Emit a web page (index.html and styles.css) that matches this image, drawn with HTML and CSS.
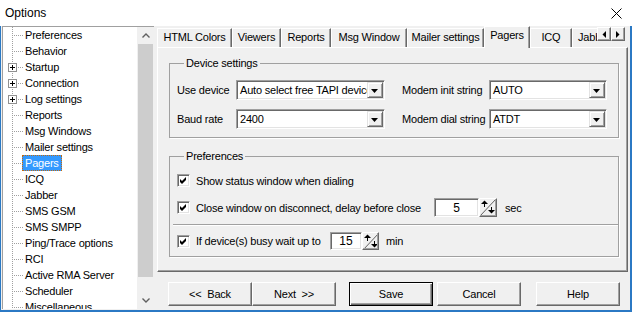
FILE: index.html
```html
<!DOCTYPE html>
<html lang="en">
<head>
    <meta charset="UTF-8">
    <title>Options</title>
    <link rel="stylesheet" href="styles.css">
</head>
<body>

<div class="titlebar">
    <span class="title">Options</span>
    <svg class="close" width="11" height="11" viewBox="0 0 11 11">
        <path d="M0.5 0.5 L10.5 10.5 M10.5 0.5 L0.5 10.5" stroke="#000" stroke-width="1"/>
    </svg>
</div>

<div class="window">
    <div class="tree">
        <ul class="tree-list">
            <li><span class="label">Preferences</span></li>
            <li><span class="label">Behavior</span></li>
            <li><span class="expander"></span><span class="label">Startup</span></li>
            <li><span class="expander"></span><span class="label">Connection</span></li>
            <li><span class="expander"></span><span class="label">Log settings</span></li>
            <li><span class="label">Reports</span></li>
            <li><span class="label">Msg Windows</span></li>
            <li><span class="label">Mailer settings</span></li>
            <li><span class="label selected">Pagers</span></li>
            <li><span class="label">ICQ</span></li>
            <li><span class="label">Jabber</span></li>
            <li><span class="label">SMS GSM</span></li>
            <li><span class="label">SMS SMPP</span></li>
            <li><span class="label">Ping/Trace options</span></li>
            <li><span class="label">RCI</span></li>
            <li><span class="label">Active RMA Server</span></li>
            <li><span class="label">Scheduler</span></li>
            <li><span class="label">Miscellaneous</span></li>
        </ul>
        <div class="vscroll">
            <div class="sb-btn">
                <svg width="8" height="5" viewBox="0 0 8 5"><polyline points="0.5,4.5 4,1 7.5,4.5" fill="none" stroke="#606060" stroke-width="1.4"/></svg>
            </div>
            <div class="sb-thumb"></div>
            <div class="sb-track"></div>
            <div class="sb-btn">
                <svg width="8" height="5" viewBox="0 0 8 5"><polyline points="0.5,0.5 4,4 7.5,0.5" fill="none" stroke="#606060" stroke-width="1.4"/></svg>
            </div>
        </div>
    </div>

    <div class="main">
        <div class="tabbar">
            <div class="tab-list">
                <div class="tab t-html">HTML Colors</div>
                <div class="tab t-viewers">Viewers</div>
                <div class="tab t-reports">Reports</div>
                <div class="tab t-msg">Msg Window</div>
                <div class="tab t-mailer">Mailer settings</div>
                <div class="tab t-pagers active">Pagers</div>
                <div class="tab t-icq">ICQ</div>
                <div class="tab t-jabber">Jabber</div>
            </div>
            <div class="tab-arrows">
                <div class="arrow-btn">
                    <svg width="4" height="7" viewBox="0 0 4 7"><polygon points="4,0 4,7 0.5,3.5" fill="#000"/></svg>
                </div>
                <div class="arrow-btn">
                    <svg width="4" height="7" viewBox="0 0 4 7"><polygon points="0,0 0,7 3.5,3.5" fill="#000"/></svg>
                </div>
            </div>
        </div>

        <div class="panel">
            <fieldset class="group device-group">
                <legend>Device settings</legend>
                <div class="device-grid">
                    <span>Use device</span>
                    <div class="combo"><span class="combo-text">Auto select free TAPI device</span><span class="drop"></span></div>
                    <span></span>
                    <span>Modem init string</span>
                    <div class="combo"><span class="combo-text">AUTO</span><span class="drop"></span></div>

                    <span>Baud rate</span>
                    <div class="combo"><span class="combo-text">2400</span><span class="drop"></span></div>
                    <span></span>
                    <span>Modem dial string</span>
                    <div class="combo"><span class="combo-text">ATDT</span><span class="drop"></span></div>
                </div>
            </fieldset>

            <fieldset class="group prefs-group">
                <legend>Preferences</legend>
                <div class="check-row first">
                    <span class="checkbox"></span>
                    <span>Show status window when dialing</span>
                </div>
                <div class="check-row second">
                    <span class="checkbox"></span>
                    <span class="delay-label">Close window on disconnect, delay before close</span>
                    <div class="spin spin-sec">
                        <span class="spin-input">5</span>
                        <span class="spin-btn"></span>
                    </div>
                    <span class="unit">sec</span>
                </div>
                <div class="separator"></div>
                <div class="check-row third">
                    <span class="checkbox"></span>
                    <span class="busy-label">If device(s) busy wait up to</span>
                    <div class="spin spin-min">
                        <span class="spin-input">15</span>
                        <span class="spin-btn"></span>
                    </div>
                    <span class="unit">min</span>
                </div>
            </fieldset>
        </div>

        <div class="buttons">
            <button class="btn">&lt;&lt;&nbsp; Back</button>
            <button class="btn">Next &nbsp;&gt;&gt;</button>
            <button class="btn default save">Save</button>
            <button class="btn cancel">Cancel</button>
            <button class="btn help">Help</button>
        </div>
    </div>
</div>

</body>
</html>
```

FILE: styles.css
```css
body {
    margin: 0;
    width: 632px;
    height: 312px;
    overflow: hidden;
    background-color: #f0f0f0;
    font-family: 'Liberation Sans', Arial, sans-serif;
    font-size: 11px;
    letter-spacing: -0.2px;
    color: #000;
}

/* title bar */
.titlebar {
    height: 26px;
    background-color: #fff;
    display: flex;
    align-items: center;
    justify-content: space-between;
    padding: 0 10px 0 5px;
    letter-spacing: 0;
}
.title {
    font-size: 12px;
}
.close {
    display: block;
    margin-top: 1px;
}

.window {
    display: flex;
    height: 284px;
    border-left: 1px solid #2b79c4;
    border-right: 2px solid #2b79c4;
    border-bottom: 2px solid #2b79c4;
}

/* tree */
.tree {
    display: flex;
    width: 152px;
    height: 283px;
    margin-left: 1px;
    box-sizing: border-box;
    border-top: 1px solid #a0a0a0;
    border-left: 1px solid #a0a0a0;
    background-color: #fff;
}
.tree-list {
    flex: 1;
    list-style: none;
    margin: 0;
    padding: 0;
    overflow: hidden;
    background: linear-gradient(to bottom, #a0a0a0 50%, transparent 50%) 9px 0 / 1px 2px repeat-y, #fff;
}
.tree-list li {
    position: relative;
    height: 16px;
    padding-left: 19px;
    white-space: nowrap;
}
.tree-list li::before {
    content: "";
    position: absolute;
    left: 11px;
    top: 8px;
    width: 9px;
    height: 1px;
    background: repeating-linear-gradient(to right, #a0a0a0 0 1px, transparent 1px 2px);
}
.expander {
    position: absolute;
    left: 5px;
    top: 4px;
    width: 9px;
    height: 9px;
    box-sizing: border-box;
    border: 1px solid #919191;
    background: linear-gradient(#000, #000) center / 5px 1px no-repeat,
                linear-gradient(#000, #000) center / 1px 5px no-repeat,
                #fff;
    z-index: 1;
}
.label {
    display: inline-block;
    line-height: 14px;
    padding: 0 2px;
    border: 1px solid transparent;
}
.label.selected {
    background-color: #3399ff;
    color: #fff;
    border: 1px dotted #c06a10;
}

.vscroll {
    width: 17px;
    display: flex;
    flex-direction: column;
    background-color: #f0f0f0;
}
.sb-btn {
    height: 17px;
    display: flex;
    align-items: center;
    justify-content: center;
}
.sb-thumb {
    height: 233px;
    margin: 0 1px;
    background-color: #cdcdcd;
}
.sb-track {
    flex: 1;
}

/* main area */
.main {
    width: 471px;
    margin-left: 3px;
    display: flex;
    flex-direction: column;
}

.tabbar {
    height: 22px;
    margin-bottom: -1px;
    display: flex;
    position: relative;
    z-index: 1;
}
.tab-list {
    flex: 1;
    display: flex;
    align-items: flex-start;
    overflow: hidden;
}
.tab {
    flex: none;
    height: 19px;
    margin-top: 2px;
    box-sizing: border-box;
    border-top: 1px solid #fff;
    border-left: 1px solid #fff;
    border-right: 1px solid #696969;
    box-shadow: inset -1px 0 #a0a0a0;
    line-height: 17px;
    text-align: center;
    white-space: nowrap;
}
.tab.active {
    height: 22px;
    margin-top: 0;
    line-height: 17px;
    background-color: #f0f0f0;
}
.t-html { width: 75px; }
.t-viewers { width: 49px; }
.t-reports { width: 50px; }
.t-msg { width: 76px; }
.t-mailer { width: 77px; }
.t-pagers { width: 46px; }
.t-icq { width: 42px; }
.t-jabber {
    width: 60px;
    text-align: left;
    padding-left: 5px;
}

.tab-arrows {
    display: flex;
    margin-top: 1px;
    margin-right: 3px;
}
.arrow-btn {
    width: 14px;
    height: 14px;
    box-sizing: border-box;
    display: flex;
    align-items: center;
    justify-content: center;
    background-color: #f0f0f0;
    border: 1px solid;
    border-color: #fff #696969 #696969 #fff;
    box-shadow: inset -1px -1px #a0a0a0;
}

.panel {
    height: 225px;
    box-sizing: border-box;
    border-top: 1px solid #fff;
    border-left: 1px solid #fff;
    border-right: 1px solid #696969;
    border-bottom: 1px solid #696969;
    box-shadow: inset -1px -1px #a0a0a0;
    padding: 0 0 0 11px;
}

.group {
    width: 450px;
    box-sizing: border-box;
    margin: 0;
    border: 1px solid #a0a0a0;
    box-shadow: 1px 1px 0 #fff;
    min-inline-size: 0;
}
.group legend {
    padding: 0 2px;
    margin-left: 7px;
    line-height: 13px;
}
.device-group {
    margin-top: 9px;
    padding: 10px 0 8px 7px;
}
.device-grid {
    display: grid;
    grid-template-columns: 59px 149px 17px 87px 118px;
    grid-auto-rows: 20px;
    row-gap: 9px;
    align-items: center;
}

.combo {
    height: 20px;
    box-sizing: border-box;
    display: flex;
    background-color: #fff;
    border: 1px solid;
    border-color: #a0a0a0 #fff #fff #a0a0a0;
    box-shadow: inset 1px 1px #696969, inset -1px -1px #e3e3e3;
    padding: 1px;
}
.combo-text {
    flex: 1;
    overflow: hidden;
    white-space: nowrap;
    line-height: 16px;
    padding-left: 2px;
}
.drop {
    width: 16px;
    height: 16px;
    box-sizing: border-box;
    border: 1px solid;
    border-color: #e3e3e3 #696969 #696969 #e3e3e3;
    box-shadow: inset 1px 1px #fff, inset -1px -1px #a0a0a0;
    background: url("data:image/svg+xml,%3Csvg xmlns='http://www.w3.org/2000/svg' width='7' height='4'%3E%3Cpolygon points='0,0 7,0 3.5,4' fill='%23000'/%3E%3C/svg%3E") 3px 6px no-repeat, #f0f0f0;
}

.prefs-group {
    margin-top: 12px;
    padding: 11px 0 6px 7px;
}
.check-row {
    display: flex;
    align-items: center;
}
.check-row.first {
    height: 13px;
}
.check-row.second {
    height: 19px;
    margin-top: 11px;
}
.check-row.third {
    height: 18px;
    margin-top: 6px;
}
.checkbox {
    width: 13px;
    height: 13px;
    margin-right: 6px;
    box-sizing: border-box;
    border: 1px solid;
    border-color: #a0a0a0 #fff #fff #a0a0a0;
    box-shadow: inset 1px 1px #696969, inset -1px -1px #e3e3e3;
    background: url("data:image/svg+xml,%3Csvg xmlns='http://www.w3.org/2000/svg' width='11' height='11'%3E%3Cpolygon points='2,4 4,6 8,2 8,5 4,9 2,7' fill='%23000'/%3E%3C/svg%3E") 0 0 no-repeat, #fff;
}
.delay-label {
    width: 238px;
}
.busy-label {
    width: 134px;
}
.spin {
    display: flex;
    height: 100%;
}
.spin-input {
    box-sizing: border-box;
    background-color: #fff;
    border: 1px solid;
    border-color: #a0a0a0 #fff #fff #a0a0a0;
    box-shadow: inset 1px 1px #696969, inset -1px -1px #e3e3e3;
    display: flex;
    align-items: center;
    justify-content: center;
    font-size: 12px;
    letter-spacing: 0;
}
.spin-sec .spin-input { width: 45px; }
.spin-min .spin-input { width: 32px; }
.spin-btn {
    box-sizing: border-box;
    border: 1px solid;
    border-color: #fff #696969 #696969 #fff;
    box-shadow: inset -1px -1px #a0a0a0;
    background: url("data:image/svg+xml,%3Csvg xmlns='http://www.w3.org/2000/svg' width='16' height='17'%3E%3Cline x1='0' y1='17' x2='16' y2='0' stroke='%23606060'/%3E%3Cpolygon points='1,5 4.5,1.5 8,5' fill='%23000'/%3E%3Crect x='4' y='4' width='1' height='4' fill='%23000'/%3E%3Cpolygon points='8,11 15,11 11.5,14.5' fill='%23000'/%3E%3Crect x='11' y='8' width='1' height='4' fill='%23000'/%3E%3C/svg%3E") 0 0 no-repeat, #f0f0f0;
}
.spin-sec .spin-btn { width: 18px; }
.spin-min .spin-btn { width: 17px; }
.unit {
    margin-left: 8px;
}
.spin-min + .unit {
    margin-left: 7px;
}
.separator {
    margin: 7px 0 6px -4px;
    border-top: 1px solid #a0a0a0;
    border-bottom: 1px solid #fff;
}

/* bottom buttons */
.buttons {
    display: flex;
    margin-top: 10px;
    padding-left: 11px;
}
.btn {
    width: 84px;
    height: 24px;
    padding: 0;
    font-family: 'Liberation Sans', Arial, sans-serif;
    font-size: 11px;
    letter-spacing: -0.2px;
    color: #000;
    background-color: #f0f0f0;
    border: 1px solid;
    border-color: #fff #696969 #696969 #fff;
    box-shadow: inset -1px -1px #a0a0a0;
}
.btn.default {
    border: 1px solid #000;
    box-shadow: inset 1px 1px #fff, inset -1px -1px #696969, inset -2px -2px #a0a0a0;
}
.save { margin-left: 13px; }
.cancel { margin-left: 4px; }
.help { margin-left: 15px; }
```
